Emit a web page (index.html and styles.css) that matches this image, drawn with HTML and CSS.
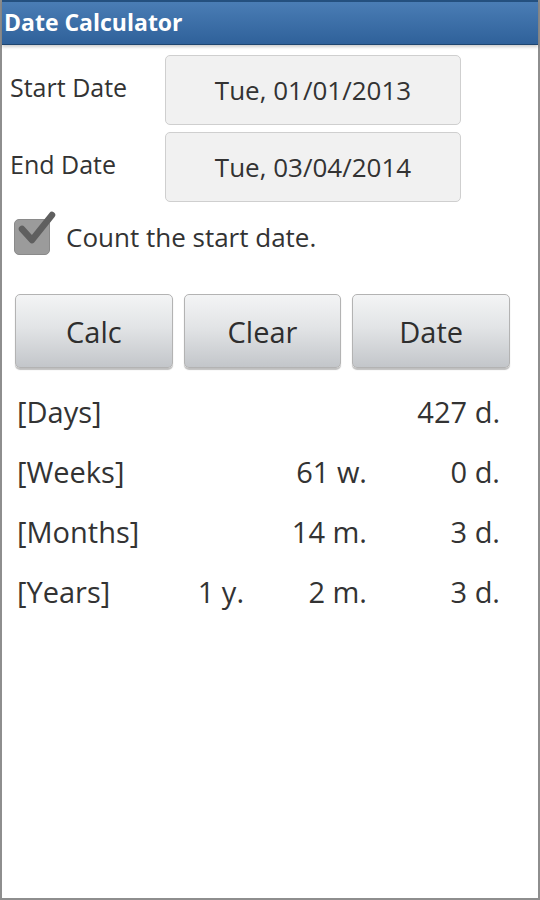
FILE: index.html
```html
<!DOCTYPE html>
<html lang="en">
<head>
    <meta charset="UTF-8">
    <meta name="viewport" content="width=device-width, initial-scale=1.0">
    <title>Date Calculator</title>
    <link rel="stylesheet" href="styles.css">
</head>
<body>
    <div id="screen">
        <div id="titlebar">Date Calculator</div>
        <div id="dates">
            <div class="date-label">Start Date</div>
            <div class="date-box">Tue, 01/01/2013</div>
            <div class="date-label">End Date</div>
            <div class="date-box">Tue, 03/04/2014</div>
        </div>
        <div id="count-row">
            <div class="checkbox">
                <svg width="44" height="44" viewBox="0 0 44 44">
                    <path d="M8 21 L18 32 L38 7" fill="none" stroke="#5f5f5f" stroke-width="6.5" stroke-linecap="round" stroke-linejoin="round"/>
                </svg>
            </div>
            <span>Count the start date.</span>
        </div>
        <div id="buttons">
            <button class="action-button">Calc</button>
            <button class="action-button">Clear</button>
            <button class="action-button">Date</button>
        </div>
        <div id="results">
            <div class="res-label">[Days]</div>
            <div class="res-val"></div>
            <div class="res-val"></div>
            <div class="res-val">427 d.</div>

            <div class="res-label">[Weeks]</div>
            <div class="res-val"></div>
            <div class="res-val">61 w.</div>
            <div class="res-val">0 d.</div>

            <div class="res-label">[Months]</div>
            <div class="res-val"></div>
            <div class="res-val">14 m.</div>
            <div class="res-val">3 d.</div>

            <div class="res-label">[Years]</div>
            <div class="res-val">1 y.</div>
            <div class="res-val">2 m.</div>
            <div class="res-val">3 d.</div>
        </div>
    </div>
</body>
</html>
```

FILE: styles.css
```css
body {
    margin: 0;
    padding: 0;
    font-family: "Open Sans", "DejaVu Sans", sans-serif;
    color: #333;
    background: #fff;
}
#screen {
    box-sizing: border-box;
    width: 540px;
    height: 900px;
    border-left: 2px solid #8e8e8e;
    border-right: 2px solid #8e8e8e;
    border-bottom: 2px solid #8e8e8e;
    background: #fff;
}
#titlebar {
    box-sizing: border-box;
    height: 45px;
    padding-left: 2px;
    line-height: 40px;
    font-size: 23px;
    font-weight: bold;
    color: #fff;
    background: linear-gradient(#4a7db5, #2f619a);
    border-top: 2px solid #24507f;
    border-bottom: 1px solid #1e456f;
    box-shadow: 0 2px 3px rgba(0, 0, 0, 0.2);
}
#dates {
    display: grid;
    grid-template-columns: 155px 296px;
    row-gap: 7px;
    margin: 10px 0 0 8px;
    align-items: center;
}
.date-label {
    font-size: 25px;
    margin-top: -6px;
}
.date-box {
    box-sizing: border-box;
    height: 70px;
    line-height: 68px;
    text-align: center;
    font-size: 26px;
    background: #f1f1f1;
    border: 1px solid #cfcfcf;
    border-radius: 5px;
}
#count-row {
    display: flex;
    align-items: center;
    margin: 17px 0 0 12px;
    font-size: 26px;
}
.checkbox {
    position: relative;
    width: 36px;
    height: 36px;
    margin-right: 16px;
    border-radius: 5px;
    background: #9b9b9b;
    border: 1px solid #8a8a8a;
    box-sizing: border-box;
}
.checkbox svg {
    position: absolute;
    left: -1px;
    top: -12px;
}
#buttons {
    display: grid;
    grid-template-columns: repeat(3, 1fr);
    column-gap: 11px;
    width: 495px;
    margin: 39px 0 0 13px;
}
.action-button {
    height: 74px;
    font-family: "Open Sans", "DejaVu Sans", sans-serif;
    font-size: 29px;
    color: #2e2e2e;
    background: linear-gradient(#f3f4f5, #e2e4e6 45%, #c3c6ca);
    border: 1px solid #b3b3b3;
    border-radius: 5px;
    box-shadow: 0 2px 1px rgba(0, 0, 0, 0.25);
    padding: 0;
}
#results {
    display: grid;
    grid-template-columns: 160px 67px 123px 133px;
    grid-auto-rows: 60px;
    align-items: center;
    margin: 13px 0 0 15px;
    font-size: 29px;
}
.res-val {
    text-align: right;
}
```
